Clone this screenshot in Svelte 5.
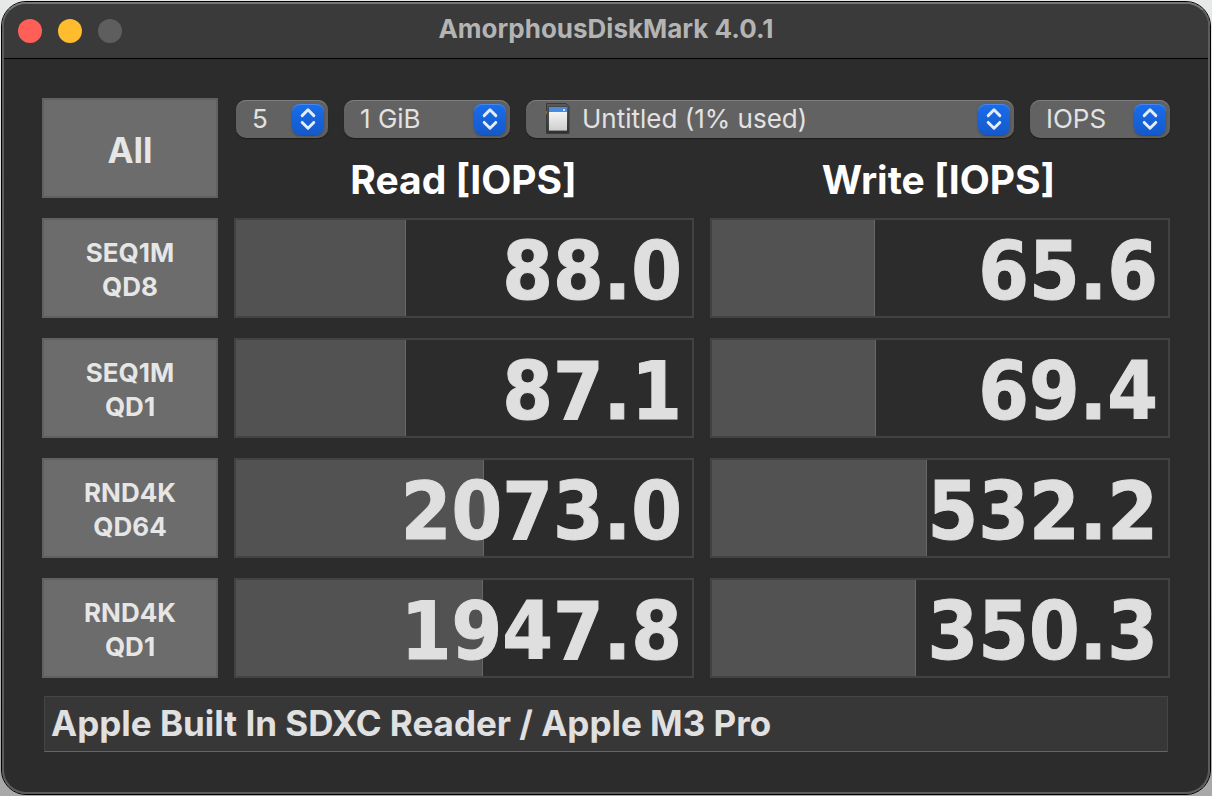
<script>
  const tests = [
    {
      name: ["SEQ1M", "QD8"],
      read: { value: 88.0, fill: 37.3 },
      write: { value: 65.6, fill: 35.8 },
    },
    {
      name: ["SEQ1M", "QD1"],
      read: { value: 87.1, fill: 37.3 },
      write: { value: 69.4, fill: 36 },
    },
    {
      name: ["RND4K", "QD64"],
      read: { value: 2073.0, fill: 54.4 },
      write: { value: 532.2, fill: 47.1 },
    },
    {
      name: ["RND4K", "QD1"],
      read: { value: 1947.8, fill: 54.2 },
      write: { value: 350.3, fill: 44.8 },
    },
  ];

  let count = $state("5");
  let size = $state("1 GiB");
  let volume = $state("Untitled (1% used)");
  let unit = $state("IOPS");
  let comment = $state("Apple Built In SDXC Reader / Apple M3 Pro");
</script>

{#snippet stepper()}
  <span class="stepper">
    <svg viewBox="0 0 32 32" aria-hidden="true">
      <path d="M10 12 L16 6 L22 12 M10 19 L16 25 L22 19" />
    </svg>
  </span>
{/snippet}

{#snippet result(label, res)}
  <div class="result" role="group" aria-label={label}>
    <div class="fill" style="width: {res.fill}%"></div>
    <span class="value">{res.value.toFixed(1)}</span>
  </div>
{/snippet}

<main class="window">
  <header class="titlebar">
    <div class="lights">
      <button class="light close" aria-label="Close"></button>
      <button class="light minimize" aria-label="Minimize"></button>
      <button class="light zoom" aria-label="Zoom" disabled></button>
    </div>
    <h1>AmorphousDiskMark 4.0.1</h1>
  </header>

  <div class="content">
    <div class="grid">
      <button class="test all">All</button>
      <div class="top">
        <div class="selects">
          <div class="popup count">
            <select bind:value={count} aria-label="Test count">
              <option>5</option>
            </select>
            {@render stepper()}
          </div>
          <div class="popup size">
            <select bind:value={size} aria-label="Test size">
              <option>1 GiB</option>
            </select>
            {@render stepper()}
          </div>
          <div class="popup volume">
            <select bind:value={volume} aria-label="Volume">
              <option>Untitled (1% used)</option>
            </select>
            <svg class="card" viewBox="0 0 24 32" aria-hidden="true">
              <defs>
                <linearGradient id="paper" x1="0" y1="0" x2="0" y2="1">
                  <stop offset="0" stop-color="#f4f4f4" />
                  <stop offset="1" stop-color="#cfcfcf" />
                </linearGradient>
                <linearGradient id="shell" x1="0" y1="0" x2="0" y2="1">
                  <stop offset="0" stop-color="#5a5a5a" />
                  <stop offset="1" stop-color="#303030" />
                </linearGradient>
              </defs>
              <path
                d="M0.5 0.5 H20 L23 3.5 V30.5 H0.5 Z"
                fill="url(#shell)"
                stroke="#3a3a3a"
              />
              <rect x="0" y="8" width="1" height="3" fill="#8b6d1c" />
              <rect x="2" y="3" width="19" height="25" fill="#474747" />
              <rect x="3" y="4" width="18" height="6" fill="#4a8bdc" />
              <rect x="17" y="6" width="2" height="2" fill="#c9e0fa" />
              <rect x="3" y="9" width="18" height="18" fill="url(#paper)" />
              <rect x="3" y="27" width="18" height="1" fill="#8e8e8e" />
            </svg>
            {@render stepper()}
          </div>
          <div class="popup unit">
            <select bind:value={unit} aria-label="Unit">
              <option>IOPS</option>
            </select>
            {@render stepper()}
          </div>
        </div>
        <div class="heads">
          <h2>Read [{unit}]</h2>
          <h2>Write [{unit}]</h2>
        </div>
      </div>

      {#each tests as test}
        <button class="test">{test.name[0]}<br />{test.name[1]}</button>
        {@render result("Read", test.read)}
        {@render result("Write", test.write)}
      {/each}
    </div>

    <input class="comment" bind:value={comment} aria-label="Comment" />
  </div>
</main>

<style>
  :global(body) {
    background: linear-gradient(#e6e9e7, #a8a8a8);
    min-height: 100vh;
  }
  :global(#app) {
    padding: 2px 1px;
  }

  .window {
    box-sizing: border-box;
    margin: 0 1px;
    border: 2px solid #5b5d5d;
    border-top-color: #747675;
    border-radius: 24px;
    outline: 1px solid #000;
    background: #2c2c2c;
    overflow: hidden;
    font-family: Inter, "Liberation Sans", sans-serif;
    color: #e6e6e6;
  }

  .titlebar {
    display: grid;
    align-items: center;
    height: 54px;
    background: #3a3a3a;
    border-bottom: 1px solid #000;
  }
  .titlebar > * {
    grid-area: 1 / 1;
  }
  h1 {
    margin: 0;
    padding-bottom: 4px;
    font-size: 26px;
    line-height: 32px;
    font-weight: 700;
    text-align: center;
    color: #b4b4b4;
  }
  .lights {
    display: flex;
    gap: 16px;
    padding-left: 14px;
  }
  .light {
    width: 24px;
    height: 24px;
    padding: 0;
    border: none;
    border-radius: 50%;
  }
  .close {
    background: #ff5f57;
  }
  .minimize {
    background: #febc2e;
  }
  .zoom {
    background: #5e5e5e;
  }

  .content {
    padding: 39px 38px 40px;
  }
  .grid {
    display: grid;
    grid-template-columns: 176px 1fr 1fr;
    grid-auto-rows: 100px;
    gap: 20px 16px;
  }

  .test {
    padding: 4px 0 0;
    border: 2px solid #616161;
    background: #6c6c6c;
    color: #e6e6e6;
    font-family: inherit;
    font-size: 26px;
    line-height: 34px;
    font-weight: 700;
  }
  .all {
    font-size: 35px;
  }

  .top {
    grid-column: span 2;
    padding-top: 2px;
  }
  .selects {
    display: flex;
    gap: 16px;
    padding-left: 2px;
  }
  .popup {
    display: grid;
    align-items: center;
    height: 38px;
  }
  .popup > * {
    grid-area: 1 / 1;
  }
  .count {
    width: 92px;
  }
  .size {
    width: 166px;
  }
  .volume {
    flex: 1;
  }
  .unit {
    width: 140px;
  }
  select {
    appearance: none;
    width: 100%;
    height: 38px;
    padding: 0 40px 2px 16px;
    border: none;
    border-radius: 10px;
    background: #626262;
    box-shadow:
      inset 0 1px 0 #7e7e7e,
      0 1px 1px #1c1c1c;
    color: #e2e2e2;
    font-family: inherit;
    font-size: 26px;
  }
  .volume select {
    padding-left: 56px;
  }
  .card {
    width: 24px;
    height: 32px;
    margin-left: 20px;
    pointer-events: none;
  }
  .stepper {
    justify-self: end;
    width: 32px;
    height: 31px;
    margin-right: 4px;
    border-radius: 8px;
    background: linear-gradient(#1a6dea, #1459cb);
    box-shadow:
      inset 0 1px 0 #4788ee,
      0 1px 2px #444;
    pointer-events: none;
  }
  .stepper svg {
    display: block;
    width: 32px;
    height: 31px;
  }
  .stepper path {
    fill: none;
    stroke: #e4ecf9;
    stroke-width: 3;
    stroke-linecap: round;
    stroke-linejoin: round;
  }

  .heads {
    display: grid;
    grid-template-columns: 1fr 1fr;
    gap: 16px;
    padding: 18px 2px 0 0;
  }
  h2 {
    margin: 0;
    font-size: 39px;
    line-height: 48px;
    font-weight: 700;
    text-align: center;
    color: #fff;
  }

  .result {
    display: grid;
    border: 2px solid #424242;
  }
  .result > * {
    grid-area: 1 / 1;
  }
  .fill {
    box-sizing: border-box;
    background: #525252;
    border-right: 1px solid #676767;
  }
  .value {
    padding: 6px 10px 0 0;
    font-family: "DejaVu Sans Condensed", "DejaVu Sans", sans-serif;
    font-size: 81px;
    line-height: 90px;
    font-weight: 700;
    text-align: right;
    color: #dfdfdf;
    -webkit-text-stroke: 1px #dfdfdf;
  }

  .comment {
    box-sizing: border-box;
    display: block;
    width: calc(100% - 4px);
    height: 56px;
    margin: 18px 2px 0;
    padding: 0 6px 2px;
    border: 1px solid #454545;
    border-bottom-color: #656565;
    background: #373737;
    color: #e0e0e0;
    font-family: inherit;
    font-size: 35px;
    font-weight: 700;
  }
</style>
